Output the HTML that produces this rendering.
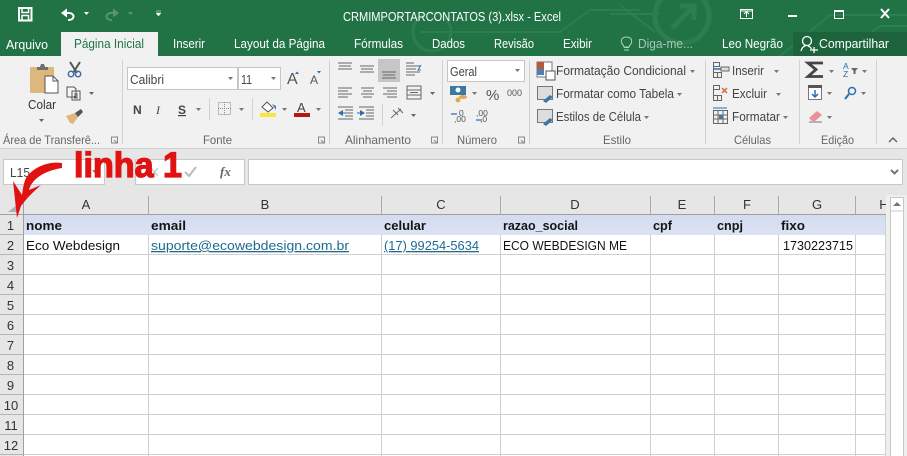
<!DOCTYPE html>
<html><head><meta charset="utf-8"><style>
html,body{margin:0;padding:0;background:#fff;width:907px;height:456px;overflow:hidden}
svg{display:block}
text{font-family:"Liberation Sans",sans-serif;font-size:12.5px;fill:#444}
.w{fill:#fff}.g{fill:#666;font-size:12px}.k{fill:#111;font-size:13px}.b{font-weight:bold;fill:#151515;font-size:13px}.l{fill:#1f6a8f;font-size:13px;text-decoration:underline}.h{fill:#333;font-size:13px}
</style></head><body>
<svg width="907" height="456" viewBox="0 0 907 456" xmlns="http://www.w3.org/2000/svg">
<rect width="907" height="456" fill="#fff"/>
<!-- title bar -->
<rect width="907" height="56" fill="#217346"/>
<g fill="none" stroke="#2c7d50" stroke-width="2">
<circle cx="682" cy="16" r="27" stroke-width="5"/><path d="M672 28 L694 6 M680 6h14v14" stroke-width="5"/>
<path d="M620 5 L655 32M780 56 L830 15H907M840 56 L880 26H907M420 32H560L590 10H640M610 14H660"/>
<circle cx="432" cy="32" r="19" stroke-width="3"/>
</g>
<!-- save -->
<g fill="none" stroke="#fff" stroke-width="2"><rect x="19" y="8" width="12.500" height="12.500"/><path d="M22 8v4.500h6.500V8M22 20.500v-5h6.500v5" stroke-width="1.500"/></g>
<path d="M61 13 L67 8.500 V17.500Z" fill="#fff"/><path d="M65 13h4c6 0 6 7 0 7h-1" fill="none" stroke="#fff" stroke-width="2"/>
<path d="M84 12h5l-2.500 3z" fill="#fff"/>
<g opacity=".6"><path d="M119 13l-6-4.500v9z" fill="#79ad8e"/><path d="M115 13h-4c-6 0-6 7 0 7h1" fill="none" stroke="#79ad8e" stroke-width="2"/><path d="M128 12h5l-2.500 3z" fill="#79ad8e"/></g>
<path d="M156 11h5M156 13h5l-2.500 3z" fill="#fff" stroke="#fff" stroke-width=".5"/>
<text x="343" y="21" class="w" textLength="218" lengthAdjust="spacingAndGlyphs">CRMIMPORTARCONTATOS (3).xlsx - Excel</text>
<!-- window controls -->
<g fill="none" stroke="#fff"><rect x="740.500" y="9.500" width="12" height="9"/><path d="M746.500 17v-5M744 14l2.500-2.500 2.500 2.500M741 11h11"/>
<path d="M788 16h9" stroke-width="2"/><rect x="834.500" y="10.500" width="9" height="8"/><path d="M834 11h10" stroke-width="2"/><path d="M881 9l8 9M889 9l-8 9" stroke-width="2"/></g>
<!-- tabs -->
<rect x="61" y="32" width="97" height="24" fill="#f1f1f1"/>
<rect x="793" y="32" width="114" height="24" fill="#1d643c"/>
<text x="6" y="49" class="w" textLength="42" lengthAdjust="spacingAndGlyphs">Arquivo</text>
<text x="74" y="48" style="fill:#217346" textLength="70" lengthAdjust="spacingAndGlyphs">Página Inicial</text>
<text x="173" y="48" class="w" textLength="32" lengthAdjust="spacingAndGlyphs">Inserir</text>
<text x="234" y="48" class="w" textLength="91" lengthAdjust="spacingAndGlyphs">Layout da Página</text>
<text x="354" y="48" class="w" textLength="49" lengthAdjust="spacingAndGlyphs">Fórmulas</text>
<text x="432" y="48" class="w" textLength="33" lengthAdjust="spacingAndGlyphs">Dados</text>
<text x="494" y="48" class="w" textLength="40" lengthAdjust="spacingAndGlyphs">Revisão</text>
<text x="563" y="48" class="w" textLength="29" lengthAdjust="spacingAndGlyphs">Exibir</text>
<path d="M624 50h5M624 47.500h5M623 45c-3-3-2-8 3.500-8s6.500 5 3.500 8l-1 2h-5z" fill="none" stroke="#b6d0c0"/>
<text x="638" y="48" style="fill:#a8c8b6" textLength="55" lengthAdjust="spacingAndGlyphs">Diga-me...</text>
<text x="722" y="48" class="w" textLength="61" lengthAdjust="spacingAndGlyphs">Leo Negrão</text>
<g fill="none" stroke="#fff" stroke-width="1.300"><circle cx="807" cy="41" r="4.500"/><path d="M801 51c1-4 3-5 5-5.500M808 46c2 .5 3 2 3.500 3M810 50h8M814 47v6"/></g>
<text x="819" y="48" class="w" textLength="70" lengthAdjust="spacingAndGlyphs">Compartilhar</text>
<!-- ribbon -->
<rect y="56" width="907" height="92" fill="#f1f1f1"/>
<rect y="148" width="907" height="1.500" fill="#cfcfcf"/>
<g fill="#d2d2d2"><rect x="122" y="60" width="1" height="84"/><rect x="442" y="60" width="1" height="84"/><rect x="529" y="60" width="1" height="84"/><rect x="705" y="60" width="1" height="84"/><rect x="799" y="60" width="1" height="84"/><rect x="876" y="60" width="1" height="84"/><rect x="329" y="60" width="1" height="84"/><rect x="209" y="98" width="1" height="22"/><rect x="252" y="98" width="1" height="22"/><rect x="382" y="104" width="1" height="22"/></g>
<!-- clipboard -->
<rect x="30" y="67" width="24" height="26" rx="1" fill="#dcb77e"/><path d="M37 70v-3h3l1-3h3l1 3h3v3z" fill="#6f6f6f"/>
<path d="M45 76h8l5 5v12H45z" fill="#fff" stroke="#555"/><path d="M53 76v5h5" fill="none" stroke="#555"/>
<path d="M70 62l7 11M80 62l-7 11" stroke="#555" stroke-width="2"/><circle cx="71" cy="74" r="2.700" fill="none" stroke="#3d6ea5" stroke-width="1.500"/><circle cx="78" cy="74" r="2.700" fill="none" stroke="#3d6ea5" stroke-width="1.500"/>
<path d="M67 87h7l2 2v8h-9zM72 91h8v9h-8zM74 94h4M74 96h4M74 98h4" fill="#f7f7f7" stroke="#555"/><path d="M89 92h5l-2.500 3z" fill="#666"/>
<path d="M66 116l9-3 3 4-5 7-3-1z" fill="#dcb77e"/><path d="M75 113l6-4 2 3-5 5z" fill="#555"/>
<text x="28" y="109" style="fill:#333" textLength="28" lengthAdjust="spacingAndGlyphs">Colar</text>
<path d="M39 119h5l-2.500 3z" fill="#666"/>
<!-- font -->
<rect x="127.500" y="67.500" width="110" height="22" fill="#fff" stroke="#c6c6c6"/><rect x="238.500" y="67.500" width="42" height="22" fill="#fff" stroke="#c6c6c6"/>
<text x="130" y="84" textLength="34" lengthAdjust="spacingAndGlyphs">Calibri</text><text x="241" y="84" textLength="11" lengthAdjust="spacingAndGlyphs">11</text>
<path d="M228 77h5l-2.500 3zM271 77h5l-2.500 3z" fill="#777"/>
<text x="287" y="84" style="font-size:16px;fill:#555">A</text><path d="M295 74h4l-2-2.500z" fill="#2c6fb0"/>
<text x="310" y="84" style="font-size:12px;fill:#555">A</text><path d="M317 71h4l-2 2.500z" fill="#2c6fb0"/>
<text x="133" y="114" style="font-size:12px;font-weight:bold;fill:#444">N</text>
<text x="156" y="114" style="font-size:12px;font-style:italic;font-family:'Liberation Serif',serif;fill:#444">I</text>
<text x="178" y="114" style="font-size:12px;font-weight:bold;fill:#444;text-decoration:underline">S</text>
<path d="M196 108h5l-2.500 3zM239 108h5l-2.500 3zM282 108h5l-2.500 3zM316 108h5l-2.500 3z" fill="#777"/>
<rect x="218.500" y="102.500" width="12" height="12" fill="none" stroke="#888" stroke-dasharray="1 1"/><path d="M224.500 102v13M218 108.500h13" stroke="#888" stroke-dasharray="1 1"/>
<path d="M262 107l5-5 6 6-5 4z" fill="#fff" stroke="#555"/><path d="M272 104l4 2v4z" fill="#3c78b4"/><rect x="260" y="113" width="16" height="4" fill="#f5e83a"/>
<text x="297" y="112" style="font-size:13px;fill:#444">A</text><rect x="294" y="113" width="16" height="4" fill="#b81616"/>
<!-- alignment -->
<g stroke="#666" fill="none">
<path d="M338 63h14M339 66h12M338 69h14M360 66h14M361 69h12M360 72h14"/>
<rect x="378" y="59" width="22" height="23" fill="#c6c6c6" stroke="none"/>
<path d="M382 72h14M383 75h12M382 78h14"/>
<path d="M406 63h8M406 66h14M406 69h10M406 72h14M406 75h9"/>
<path d="M338 88h14M338 91h10M338 94h14M338 97h10M361 88h13M363 91h9M361 94h13M363 97h9M383 88h14M387 91h10M383 94h14M387 97h10"/>
<rect x="407" y="86" width="14" height="13"/><path d="M407 90h14M407 95h14M410 92.500h8" /><path d="M430 92h5l-2.500 3z" fill="#666" stroke="none"/>
<path d="M345 110h8M345 113h8M345 116h8M338 107h15M338 119h15M374 110h-8M374 113h-8M374 116h-8M359 107h15M359 119h15"/>
<path d="M391 118l10-9M393 110l5 5M398 108l5 5"/><path d="M411 114h5l-2.500 3z" fill="#666" stroke="none"/>
</g>
<path d="M338 113l5-3v6z" fill="#2c6fb0"/><path d="M365 113l-5-3v6z" fill="#2c6fb0"/><path d="M342 113h4M357 113h4" stroke="#2c6fb0"/>
<path d="M421 65l-3 5h3" fill="none" stroke="#2c6fb0"/>
<!-- number -->
<rect x="447.500" y="60.500" width="77" height="21" fill="#fff" stroke="#c6c6c6"/>
<text x="450" y="76" textLength="27" lengthAdjust="spacingAndGlyphs">Geral</text><path d="M515 69h5l-2.500 3z" fill="#777"/>
<rect x="450" y="86" width="16" height="9" fill="#3c78a4"/><circle cx="458" cy="90" r="2.500" fill="#fff"/><ellipse cx="463" cy="97" rx="4" ry="2" fill="#e0a94f"/><circle cx="458" cy="100" r="2.500" fill="#e0a94f"/>
<path d="M472 92h5l-2.500 3z" fill="#777"/>
<text x="486" y="100" style="font-size:15px;fill:#555">%</text><text x="507" y="96" style="font-size:9px;fill:#555">000</text>
<text x="454" y="122" style="font-size:8.500px;fill:#555">,00</text><text x="459" y="116" style="font-size:8.500px;fill:#555">0</text>
<text x="476" y="116" style="font-size:8.500px;fill:#555">,00</text><text x="480" y="122" style="font-size:8.500px;fill:#555">,0</text>
<path d="M451 114h6M476 120h6" stroke="#2c6fb0" stroke-width="1.300"/>
<!-- style -->
<rect x="537" y="62" width="15" height="15" fill="#fff" stroke="#777"/><rect x="537" y="62" width="7" height="7" fill="#b45a3c"/><rect x="537" y="69" width="7" height="6" fill="#4f7fb5"/><rect x="546" y="71" width="9" height="9" fill="#fff" stroke="#555"/>
<rect x="537.500" y="86.500" width="15" height="13" fill="#ddd" stroke="#777"/><path d="M543 101l7-6 3 2-7 6z" fill="#3c78a4"/>
<rect x="537.500" y="109.500" width="15" height="13" fill="#ddd" stroke="#777"/><path d="M543 124l7-6 3 2-7 6z" fill="#3c78a4"/>
<text x="556" y="75" textLength="130" lengthAdjust="spacingAndGlyphs">Formatação Condicional</text><path d="M690 70h5l-2.500 3z" fill="#777"/>
<text x="556" y="98" textLength="118" lengthAdjust="spacingAndGlyphs">Formatar como Tabela</text><path d="M677 93h5l-2.500 3z" fill="#777"/>
<text x="556" y="121" textLength="85" lengthAdjust="spacingAndGlyphs">Estilos de Célula</text><path d="M644 116h5l-2.500 3z" fill="#777"/>
<!-- cells -->
<g fill="none" stroke="#666"><path d="M713.500 62.500h6v4h-6zM713.500 72.500h8v5h-8zM717.500 72v5M713.500 66v6"/><rect x="721" y="67" width="8" height="4" fill="#ddd"/><path d="M713.500 85.500h6v4h-6zM713.500 95.500h8v5h-8zM717.500 95v5M713.500 89v6"/><rect x="713.500" y="110.500" width="14" height="13"/><path d="M713 115h15M713 119h15M718 110v14M723 110v14"/></g>
<path d="M714 69h7" stroke="#2c6fb0" stroke-width="1.500"/><path d="M722 88l5 5M727 88l-5 5" stroke="#d5693f" stroke-width="1.500"/><rect x="719" y="115" width="4" height="4" fill="#3c78a4"/><path d="M713 108h14" stroke="#2c6fb0"/>
<text x="732" y="75" textLength="32" lengthAdjust="spacingAndGlyphs">Inserir</text><path d="M774 70h5l-2.500 3z" fill="#777"/>
<text x="732" y="98" textLength="35" lengthAdjust="spacingAndGlyphs">Excluir</text><path d="M776 93h5l-2.500 3z" fill="#777"/>
<text x="732" y="121" textLength="48" lengthAdjust="spacingAndGlyphs">Formatar</text><path d="M783 116h5l-2.500 3z" fill="#777"/>
<!-- edit -->
<path d="M823 63h-15l8 6.500-8 7h15" fill="none" stroke="#444" stroke-width="2.800"/>
<path d="M829 70h5l-2.500 3zM851 70h0zM827 92h5l-2.500 3zM861 92h5l-2.500 3zM827 116h5l-2.500 3zM862 70h5l-2.500 3z" fill="#777"/>
<text x="843" y="69" style="font-size:8.500px;fill:#2c6fb0">A</text><text x="843" y="77" style="font-size:8.500px;fill:#2c6fb0">Z</text><path d="M851 68h7l-2.500 3v3h-2v-3z" fill="#666"/>
<rect x="808.500" y="85.500" width="13" height="14" fill="#fff" stroke="#777"/><rect x="808" y="85" width="14" height="3" fill="#555"/><path d="M815 90v7M812 94l3 3 3-3" fill="none" stroke="#2c6fb0" stroke-width="1.500"/>
<circle cx="852" cy="91" r="3.500" fill="none" stroke="#2c6fb0" stroke-width="1.500"/><path d="M849 94l-4 5" stroke="#2c6fb0" stroke-width="2"/>
<path d="M809 118l8-7 5 4-7 6h-3z" fill="#e8919a"/><path d="M809 122h13" stroke="#777"/>
<path d="M889 142l4-4 4 4" fill="none" stroke="#666" stroke-width="1.500"/>
<!-- group labels -->
<text x="3" y="144" class="g" textLength="97" lengthAdjust="spacingAndGlyphs">Área de Transferê...</text>
<text x="203" y="144" class="g" textLength="29" lengthAdjust="spacingAndGlyphs">Fonte</text>
<text x="345" y="144" class="g" textLength="66" lengthAdjust="spacingAndGlyphs">Alinhamento</text>
<text x="457" y="144" class="g" textLength="40" lengthAdjust="spacingAndGlyphs">Número</text>
<text x="603" y="144" class="g" textLength="28" lengthAdjust="spacingAndGlyphs">Estilo</text>
<text x="734" y="144" class="g" textLength="37" lengthAdjust="spacingAndGlyphs">Células</text>
<text x="821" y="144" class="g" textLength="33" lengthAdjust="spacingAndGlyphs">Edição</text>
<g fill="none" stroke="#888"><path d="M111.500 143v-6h6v6zM114 140l3 3M318.500 143v-6h6v6zM321 140l3 3M431.500 143v-6h6v6zM434 140l3 3M518.500 143v-6h6v6zM521 140l3 3"/></g>
<!-- formula bar -->
<rect y="150" width="907" height="65" fill="#e6e6e6"/>
<rect x="3.500" y="159.500" width="101" height="25" fill="#fff" stroke="#c8c8c8"/>
<rect x="135.500" y="159.500" width="109" height="25" fill="#fff" stroke="#c8c8c8"/>
<rect x="248.500" y="159.500" width="654" height="25" fill="#fff" stroke="#c8c8c8"/>
<text x="10" y="177" textLength="20" lengthAdjust="spacingAndGlyphs">L15</text>
<path d="M92 170h6l-3 3.500z" fill="#888"/>
<path d="M151 168l7 8M158 168l-7 8" stroke="#ccc" stroke-width="1.500"/>
<path d="M185 172l4 4 7-9" fill="none" stroke="#bbb" stroke-width="2"/>
<text x="220" y="176" style="font-family:'Liberation Serif',serif;font-style:italic;font-weight:bold;font-size:13px;fill:#666">fx</text>
<path d="M891 170l3.500 3.500 3.500-3.500" fill="none" stroke="#777" stroke-width="2"/>
<!-- grid -->
<rect x="0" y="215" width="23" height="241" fill="#e6e6e6"/>
<rect x="23" y="214" width="863" height="242" fill="#fff"/>
<rect x="886" y="195" width="21" height="261" fill="#efefef"/>
<rect x="890.500" y="197.500" width="13" height="259" fill="#fff" stroke="#c8c8c8"/><path d="M890 211h14" stroke="#c8c8c8"/><path d="M893 206h8l-4-4z" fill="#777"/>
<defs><linearGradient id="b" x1="0" x2="0" y1="0" y2="1"><stop offset="0" stop-color="#d3dcf0"/><stop offset="1" stop-color="#dbe3f3"/></linearGradient></defs>
<rect x="23" y="215" width="863" height="20" fill="url(#b)"/>
<g stroke="#cfcfcf">
<path d="M23 254.500H886M23 274.500H886M23 294.500H886M23 314.500H886M23 334.500H886M23 354.500H886M23 374.500H886M23 394.500H886M23 414.500H886M23 434.500H886M23 454.500H886"/>
<path d="M148.500 235V456M381.500 235V456M500.500 235V456M650.500 235V456M714.500 235V456M778.500 235V456M855.500 235V456M885.500 214V456"/>
</g>
<g stroke="#aaa"><path d="M148.500 196V214M381.500 196V214M500.500 196V214M650.500 196V214M714.500 196V214M778.500 196V214M855.500 196V214"/></g>
<path d="M0 214.500H886" stroke="#9f9f9f"/><path d="M23.500 195V456" stroke="#9f9f9f"/>
<g stroke="#b5b5b5"><path d="M0 234.500H23M0 254.500H23M0 274.500H23M0 294.500H23M0 314.500H23M0 334.500H23M0 354.500H23M0 374.500H23M0 394.500H23M0 414.500H23M0 434.500H23M0 454.500H23"/></g>
<path d="M8 212h10v-8z" fill="#b0b0b0"/>
<g text-anchor="middle">
<text x="86" y="209" class="h">A</text><text x="265" y="209" class="h">B</text><text x="441" y="209" class="h">C</text><text x="575" y="209" class="h">D</text><text x="682" y="209" class="h">E</text><text x="747" y="209" class="h">F</text><text x="817" y="209" class="h">G</text><text x="884" y="209" class="h">H</text>
</g>
<rect x="886" y="196" width="4" height="18" fill="#efefef"/>
<g text-anchor="middle">
<text x="10.500" y="230" class="h">1</text><text x="10.500" y="250" class="h">2</text><text x="10.500" y="270" class="h">3</text><text x="10.500" y="290" class="h">4</text><text x="10.500" y="310" class="h">5</text><text x="10.500" y="330" class="h">6</text><text x="10.500" y="350" class="h">7</text><text x="10.500" y="370" class="h">8</text><text x="10.500" y="390" class="h">9</text><text x="11" y="410" class="h">10</text><text x="11" y="430" class="h">11</text><text x="11" y="450" class="h">12</text>
</g>
<text x="26" y="230" class="b" textLength="36" lengthAdjust="spacingAndGlyphs">nome</text>
<text x="151" y="230" class="b" textLength="35" lengthAdjust="spacingAndGlyphs">email</text>
<text x="384" y="230" class="b" textLength="42" lengthAdjust="spacingAndGlyphs">celular</text>
<text x="503" y="230" class="b" textLength="75" lengthAdjust="spacingAndGlyphs">razao_social</text>
<text x="653" y="230" class="b" textLength="19" lengthAdjust="spacingAndGlyphs">cpf</text>
<text x="717" y="230" class="b" textLength="26" lengthAdjust="spacingAndGlyphs">cnpj</text>
<text x="781" y="230" class="b" textLength="24" lengthAdjust="spacingAndGlyphs">fixo</text>
<text x="26" y="250" class="k" textLength="94" lengthAdjust="spacingAndGlyphs">Eco Webdesign</text>
<text x="151" y="250" class="l" textLength="198" lengthAdjust="spacingAndGlyphs">suporte@ecowebdesign.com.br</text>
<text x="384" y="250" class="l" textLength="95" lengthAdjust="spacingAndGlyphs">(17) 99254-5634</text>
<text x="503" y="250" class="k" textLength="124" lengthAdjust="spacingAndGlyphs">ECO WEBDESIGN ME</text>
<text x="783" y="250" class="k" textLength="70" lengthAdjust="spacingAndGlyphs">1730223715</text>
<!-- annotation -->
<text x="74" y="177" textLength="108" lengthAdjust="spacingAndGlyphs" style="font-size:35px;font-weight:bold;fill:#e01212;stroke:#e01212;stroke-width:1.300px">linha 1</text>
<path d="M62 163C50 161 34 166 26 178C24 182 23 188 22 195L13 181L17 218L21 206C27 198 33 192 41 185L29 190C31 181 42 171 62 168Z" fill="#e01212"/>
</svg>
</body></html>
